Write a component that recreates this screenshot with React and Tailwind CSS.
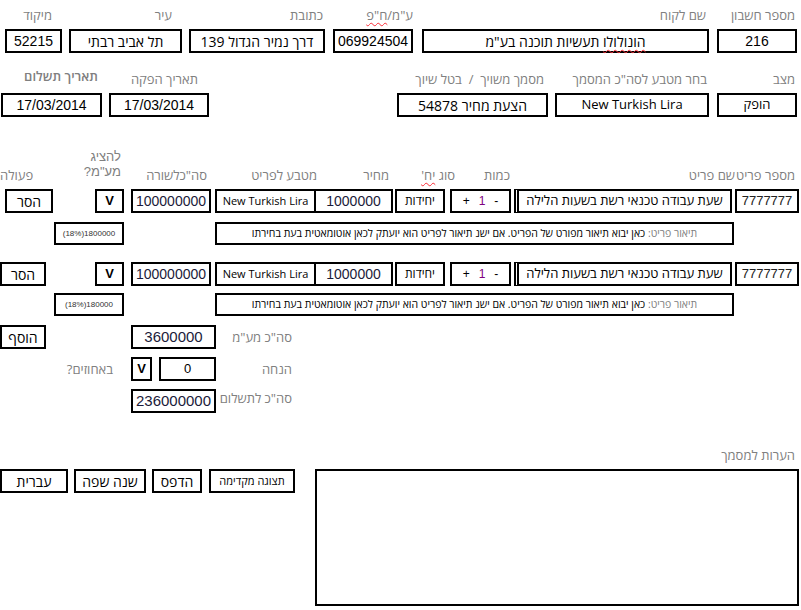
import React from "react";

const HEB = "font-['Open_Sans','Liberation_Sans',sans-serif]";

const Box = ({ className = "", children }) => (
	<div className={`flex items-center justify-center border-2 border-black bg-white shrink-0 whitespace-nowrap ${className}`}>
		{children}
	</div>
);

const Heb = ({ className = "", children }) => (
	<span dir="rtl" className={`${HEB} ${className}`}>
		{children}
	</span>
);

const Label = ({ className = "", children }) => (
	<div className={`h-[16px] leading-[16px] text-[13px] text-[#808080] whitespace-nowrap ${HEB} ${className}`} dir="rtl">
		{children}
	</div>
);

// label on top, box under it
const Field = ({ className = "", labelClass = "", label, boxClass = "", children }) => (
	<div className={`flex flex-col shrink-0 ${className}`}>
		<Label className={`text-right ${labelClass}`}>{label}</Label>
		<Box className={`mt-[6px] h-[24px] w-full text-[13px] ${boxClass}`}>{children}</Box>
	</div>
);

const Squiggle = ({ children }) => (
	<span className="underline decoration-wavy decoration-red-500 decoration-1 underline-offset-2">{children}</span>
);

const ItemRow = ({ first }) => (
	<div className="flex h-[24px] text-[13px]">
		<Box className={first ? "ml-[5px] w-[48px]" : "ml-0 w-[46px]"}>
			<Heb className="text-[14px]">הסר</Heb>
		</Box>
		<Box className={first ? "ml-[42px] w-[29px] font-bold" : "ml-[49px] w-[29px] font-bold"}>V</Box>
		<Box className="ml-[7px] w-[80px] text-[14px] text-[#1b1b3a]">100000000</Box>
		<Box className="ml-[4px] w-[101px] text-[11px]">
			<span className={HEB}>New Turkish Lira</span>
		</Box>
		<Box className="w-[77px] border-l-0 text-[14px] text-[#1b1b3a]">1000000</Box>
		<Box className="ml-[2px] w-[50px] text-[12px]">
			<Heb>יחידות</Heb>
		</Box>
		<Box className="ml-[5px] w-[61px] gap-[9px] text-[12px]">
			<span>+</span>
			<span className="text-[#800080]">1</span>
			<span>-</span>
		</Box>
		<Box className="ml-[3px] w-[218px] border-l-[5px] [border-left-style:double] text-[13px]">
			<Heb>שעת עבודה טכנאי רשת בשעות הלילה</Heb>
		</Box>
		<Box className="ml-[3px] w-[64px] text-[13px] text-[#222]">7777777</Box>
	</div>
);

const DescRow = ({ vat, className = "" }) => (
	<div className={`flex h-[23px] ${className}`}>
		<Box className="ml-[54px] w-[70px] text-[8px] text-[#333]">
			<span>(18%){vat}</span>
		</Box>
		<Box className="ml-[91px] w-[519px] text-[10.5px]">
			<Heb>
				<span className="text-[#808080]">תיאור פריט: </span>
				כאן יבוא תיאור מפורט של הפריט. אם ישנ תיאור לפריט הוא יועתק לכאן אוטומאטית בעת בחירתו
			</Heb>
		</Box>
	</div>
);

export default function App() {
	return (
		<div className="w-[801px] h-[610px] bg-white text-black font-['Liberation_Sans',Arial,sans-serif] flex flex-col overflow-hidden">
			{/* customer details */}
			<div className="flex pt-[7px]">
				<Field className="ml-[5px] w-[57px]" labelClass="pr-[10px]" boxClass="text-[14px]" label="מיקוד">52215</Field>
				<Field className="ml-[7px] w-[113px]" labelClass="pr-[10px]" boxClass="text-[14px]" label="עיר">
					<Heb>תל אביב רבתי</Heb>
				</Field>
				<Field className="ml-[7px] w-[136px]" labelClass="pr-[2px]" boxClass="text-[14px]" label="כתובת">
					<Heb>דרך נמיר הגדול 139</Heb>
				</Field>
				<Field
					className="ml-[8px] w-[80px]"
					labelClass="pr-0"
					boxClass="text-[14px]"
					label={<>ע"מ/<Squiggle>ח"פ</Squiggle></>}
				>
					069924504
				</Field>
				<Field className="ml-[9px] w-[287px]" labelClass="pr-[3px]" boxClass="text-[14px]" label="שם לקוח">
					<Heb>
						<Squiggle>הונולולו</Squiggle> תעשיות תוכנה בע"מ
					</Heb>
				</Field>
				<Field className="ml-[8px] w-[80px]" labelClass="pr-[2px]" boxClass="text-[14px]" label="מספר חשבון">216</Field>
			</div>

			{/* document details */}
			<div className="flex mt-[18px]">
				<Field className="ml-[1px] w-[101px]" labelClass="pr-[4px] text-[10.5px] font-semibold -mt-[3px] mb-[3px]" boxClass="text-[14px]" label="תאריך תשלום">17/03/2014</Field>
				<Field className="ml-[7px] w-[100px]" labelClass="pr-[11px]" boxClass="text-[14px]" label="תאריך הפקה">17/03/2014</Field>
				<Field className="ml-[188px] w-[151px]" labelClass="pr-[4px] whitespace-pre" boxClass="text-[14px]" label="מסמך משויך  /  בטל שיוך">
					<Heb>הצעת מחיר 54878</Heb>
				</Field>
				<Field className="ml-[7px] w-[154px]" labelClass="pr-[2px]" boxClass="text-[12px]" label='בחר מטבע לסה"כ המסמך'>
					<span className={HEB}>New Turkish Lira</span>
				</Field>
				<Field className="ml-[8px] w-[80px]" labelClass="pr-[2px]" label="מצב">
					<Heb>הופק</Heb>
				</Field>
			</div>

			{/* items header */}
			<div className="flex mt-[30px] h-[36px] items-end">
				<Label className="w-[60px] text-left">פעולה</Label>
				<div className="w-[64px] pr-[3px] pb-[4px] text-[13px] leading-[15px] text-[#808080] text-right" dir="rtl">
					<div>להציג</div>
					<div>מע"מ?</div>
				</div>
				<Label className="w-[87px] pr-[4px] text-right">סה"כלשורה</Label>
				<Label className="w-[107px] pr-[1px] text-right">מטבע לפריט</Label>
				<Label className="w-[75px] pr-[4px] text-right">מחיר</Label>
				<Label className="w-[65px] pr-[3px] text-right text-[11px]">
					סוג <Squiggle>יח'</Squiggle>
				</Label>
				<Label className="w-[54px] pr-[2px] text-right">כמות</Label>
				<Label className="w-[223px] pr-0 text-right">שם פריט</Label>
				<Label className="w-[64px] pr-[4px] text-right overflow-visible">מספר פריט</Label>
			</div>

			{/* items */}
			<div className="mt-[6px]">
				<ItemRow first />
			</div>
			<DescRow vat="1800000" className="mt-[9px]" />
			<div className="mt-[17px]">
				<ItemRow />
			</div>
			<DescRow vat="180000" className="mt-[7px]" />

			{/* totals */}
			<div className="flex h-[24px] mt-[9px]">
				<Box className="w-[46px] text-[14px]">
					<Heb>הוסף</Heb>
				</Box>
				<Box className="ml-[85px] w-[85px] text-[15px] text-[#1b1b3a]">3600000</Box>
				<Label className="w-[76px] self-center text-right">סה"כ מע"מ</Label>
			</div>
			<div className="flex h-[24px] mt-[8px]">
				<Label className="w-[113px] self-center text-right text-[12px]">באחוזים?</Label>
				<Box className="ml-[18px] w-[21px] text-[13px] font-bold">V</Box>
				<Box className="ml-[7px] w-[57px] text-[13px]">0</Box>
				<Label className="w-[76px] self-center text-right">הנחה</Label>
			</div>
			<div className="flex h-[24px] mt-[8px]">
				<Box className="ml-[131px] w-[85px] text-[15px] text-[#1b1b3a]">236000000</Box>
				<Label className="w-[76px] text-[12px] text-right self-center -mt-[6px]">סה"כ לתשלום</Label>
			</div>

			{/* notes and actions */}
			<div className="flex justify-end mt-[34px] pr-[6px]">
				<Label className="text-right">הערות למסמך</Label>
			</div>
			<div className="flex mt-[6px] items-start">
				<Box className="w-[68px] h-[24px] text-[14px]">
					<Heb>עברית</Heb>
				</Box>
				<Box className="ml-[6px] w-[72px] h-[24px] text-[14px]">
					<Heb>שנה שפה</Heb>
				</Box>
				<Box className="ml-[6px] w-[50px] h-[24px] text-[14px]">
					<Heb>הדפס</Heb>
				</Box>
				<Box className="ml-[7px] w-[86px] h-[24px] text-[11px]">
					<Heb>תצוגה מקדימה</Heb>
				</Box>
				<textarea className="ml-[20px] w-[484px] h-[137px] border-2 border-black resize-none outline-none" dir="rtl" />
			</div>
		</div>
	);
}
